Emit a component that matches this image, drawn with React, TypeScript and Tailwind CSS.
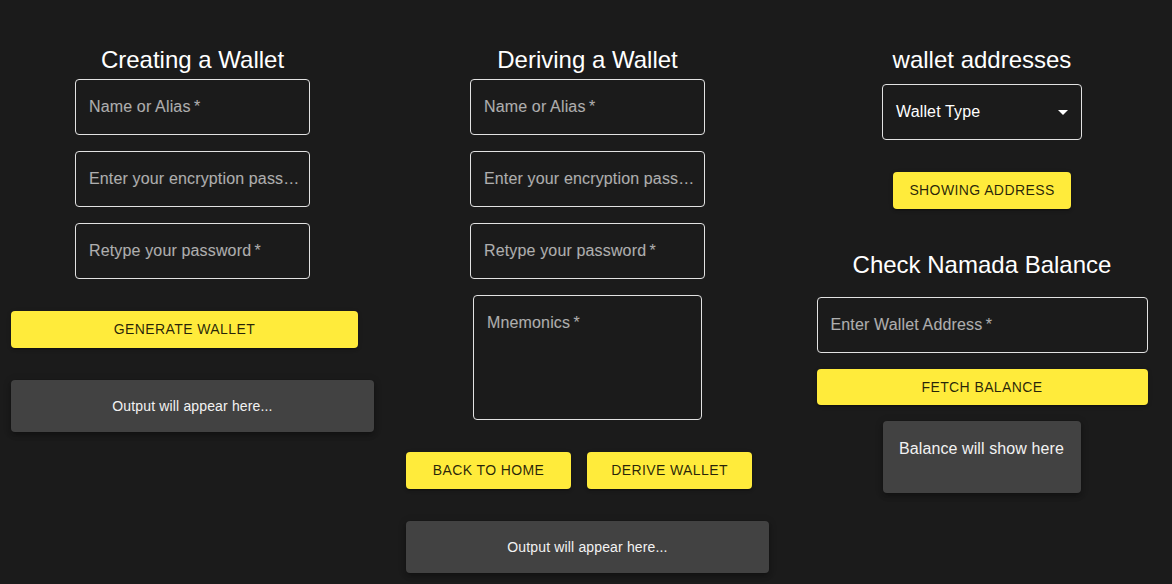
import React from 'react';

const font = { fontFamily: '"Liberation Sans", Arial, sans-serif' };

function Field({ label, className = '' }: { label: string; className?: string }) {
  return (
    <div className={`h-[56px] rounded-[4px] border border-[#e2e2e2] pl-[13px] pt-[15px] ${className}`}>
      <span className="block max-w-[211px] truncate text-[16px] leading-[23px] tracking-[0.15px] text-white/65">
        {label}&thinsp;*
      </span>
    </div>
  );
}

function YellowButton({ children, className = '' }: { children: React.ReactNode; className?: string }) {
  return (
    <button className={`flex items-center justify-center rounded-[4px] bg-[#ffeb3b] px-4 text-[14px] font-medium uppercase tracking-[0.4px] text-black/85 shadow-[0_3px_1px_-2px_rgba(0,0,0,0.2),0_2px_2px_0_rgba(0,0,0,0.14),0_1px_5px_0_rgba(0,0,0,0.12)] ${className}`}>
      {children}
    </button>
  );
}

function Output({ text, className = '' }: { text: string; className?: string }) {
  return (
    <div className={`h-[52px] rounded-[4px] bg-[#424242] p-4 text-center text-[14px] leading-[20px] tracking-[0.15px] text-[#f2f2f2] shadow-[0_2px_4px_-1px_rgba(0,0,0,0.2),0_4px_5px_0_rgba(0,0,0,0.14),0_1px_10px_0_rgba(0,0,0,0.12)] ${className}`}>
      {text}
    </div>
  );
}

function Title({ children, className = '' }: { children: React.ReactNode; className?: string }) {
  return <h2 className={`h-[32px] text-center text-[24px] leading-[32px] text-white ${className}`}>{children}</h2>;
}

export default function App() {
  return (
    <div className="min-h-[584px] w-full bg-[#1b1b1b]" style={font}>
      <div className="grid grid-cols-[363px_363px_362px] gap-x-[32px] px-[11px] pt-[44px]">
        {/* Creating a wallet */}
        <div className="flex flex-col">
          <Title>Creating a Wallet</Title>
          <div className="mt-[3px] flex flex-col items-center gap-4">
            <Field label="Name or Alias" className="w-[235px]" />
            <Field label="Enter your encryption password" className="w-[235px]" />
            <Field label="Retype your password" className="w-[235px]" />
          </div>
          <YellowButton className="mt-8 h-[37px] w-[347px]">Generate Wallet</YellowButton>
          <Output text="Output will appear here..." className="mt-8" />
        </div>

        {/* Deriving a wallet */}
        <div className="flex flex-col">
          <Title>Deriving a Wallet</Title>
          <div className="mt-[3px] flex flex-col items-center gap-4">
            <Field label="Name or Alias" className="w-[235px]" />
            <Field label="Enter your encryption password" className="w-[235px]" />
            <Field label="Retype your password" className="w-[235px]" />
            <div className="h-[125px] w-[229px] rounded-[4px] border border-[#e2e2e2] px-[13px] pt-[15px]">
              <span className="block text-[16px] leading-[23px] tracking-[0.15px] text-white/65">Mnemonics&thinsp;*</span>
            </div>
          </div>
          <div className="mt-8 flex gap-4">
            <YellowButton className="h-[37px] w-[165px]">Back to Home</YellowButton>
            <YellowButton className="h-[37px] w-[165px]">Derive Wallet</YellowButton>
          </div>
          <Output text="Output will appear here..." className="mt-8" />
        </div>

        {/* Addresses + balance */}
        <div className="flex flex-col items-center">
          <Title>wallet addresses</Title>
          <div className="relative mt-2 h-[56px] w-[200px] rounded-[4px] border border-[#e2e2e2] px-[13px] pt-[15px]">
            <span className="block text-[16px] leading-[23px] tracking-[0.15px] text-white">Wallet Type</span>
            <svg viewBox="0 0 24 24" className="absolute right-[6px] top-[15px] h-6 w-6 fill-white">
              <path d="M7 10l5 5 5-5z" />
            </svg>
          </div>
          <YellowButton className="mt-8 h-[37px]">Showing Address</YellowButton>
          <Title className="mt-[40px]">Check Namada Balance</Title>
          <Field label="Enter Wallet Address" className="mt-4 w-[331px]" />
          <YellowButton className="mt-4 h-[36px] w-[331px]">Fetch Balance</YellowButton>
          <div className="mt-4 h-[72px] w-[198px] whitespace-nowrap rounded-[4px] bg-[#424242] px-4 py-4 text-[16px] leading-[24px] tracking-[0.1px] text-[#f2f2f2] shadow-[0_2px_4px_-1px_rgba(0,0,0,0.2),0_4px_5px_0_rgba(0,0,0,0.14),0_1px_10px_0_rgba(0,0,0,0.12)]">
            Balance will show here
          </div>
        </div>
      </div>
    </div>
  );
}
